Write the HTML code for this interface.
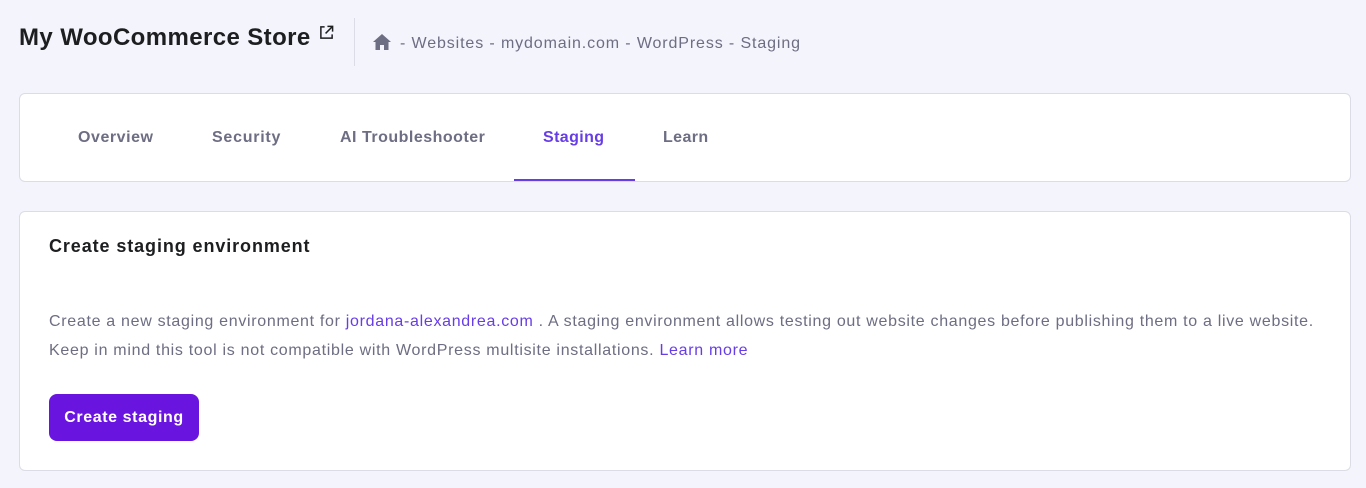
<!DOCTYPE html>
<html><head><style>
*{margin:0;padding:0;box-sizing:border-box}
body{width:1366px;height:488px;background:#f4f4fc;font-family:"Liberation Sans",sans-serif;position:relative;overflow:hidden}
.a{position:absolute;white-space:nowrap}
.card{position:absolute;left:19px;width:1332px;background:#fff;border:1px solid #dcdce6;border-radius:6px}
.tab{position:absolute;top:128px;font-size:16px;font-weight:bold;color:#6d6d83;line-height:20px;letter-spacing:0.55px}
p{color:#6d6d83;font-size:16px}
.l{color:#673de6}
</style></head><body>
<div class="a" style="left:19px;top:23px;font-size:24px;font-weight:bold;color:#1d1e20;line-height:30px;letter-spacing:0.4px">My WooCommerce Store</div>
<svg class="a" style="left:319px;top:25px" width="15" height="15" viewBox="0 0 16 16"><path d="M6 2H2v12h12v-4" fill="none" stroke="#1d1e20" stroke-width="1.6"/><path d="M9 1.5h5.5V7M14.5 1.5L7 9" fill="none" stroke="#1d1e20" stroke-width="1.6"/></svg>
<div class="a" style="left:354px;top:18px;width:1px;height:48px;background:#dcdce6"></div>
<svg class="a" style="left:373px;top:34px" width="18" height="16" viewBox="0 0 18 16"><path d="M9 0L0 8h2.5v8h4.5v-5h4v5h4.5V8H18z" fill="#6d6d83"/></svg>
<div class="a" style="left:400px;top:34px;font-size:16px;color:#6d6d83;line-height:20px;letter-spacing:0.88px">- Websites - mydomain.com - WordPress - Staging</div>
<div class="card" style="top:93px;height:89px"></div>
<div class="tab" style="left:78px">Overview</div>
<div class="tab" style="left:212px;letter-spacing:0.75px">Security</div>
<div class="tab" style="left:340px;letter-spacing:0.5px">AI Troubleshooter</div>
<div class="tab" style="left:543px;color:#673de6;letter-spacing:0.4px">Staging</div>
<div class="tab" style="left:663px;letter-spacing:0.4px">Learn</div>
<div class="a" style="left:514px;top:179px;width:121px;height:2px;background:#673de6"></div>
<div class="card" style="top:211px;height:260px"></div>
<div class="a" style="left:49px;top:235px;font-size:18px;font-weight:bold;color:#1d1e20;line-height:22px;letter-spacing:0.9px">Create staging environment</div>
<p class="a" style="left:49px;top:312px;line-height:20px;letter-spacing:0.69px">Create a new staging environment for <span class="l">jordana-alexandrea.com</span> . A staging environment allows testing out website changes before publishing them to a live website.</p>
<p class="a" style="left:49px;top:341px;line-height:20px;letter-spacing:0.7px">Keep in mind this tool is not compatible with WordPress multisite installations. <span class="l">Learn more</span></p>
<div class="a" style="left:49px;top:394px;width:150px;height:47px;background:#6a14e0;border-radius:8px;color:#fff;font-weight:bold;font-size:16px;line-height:47px;text-align:center;letter-spacing:0.6px">Create staging</div>
</body></html>
